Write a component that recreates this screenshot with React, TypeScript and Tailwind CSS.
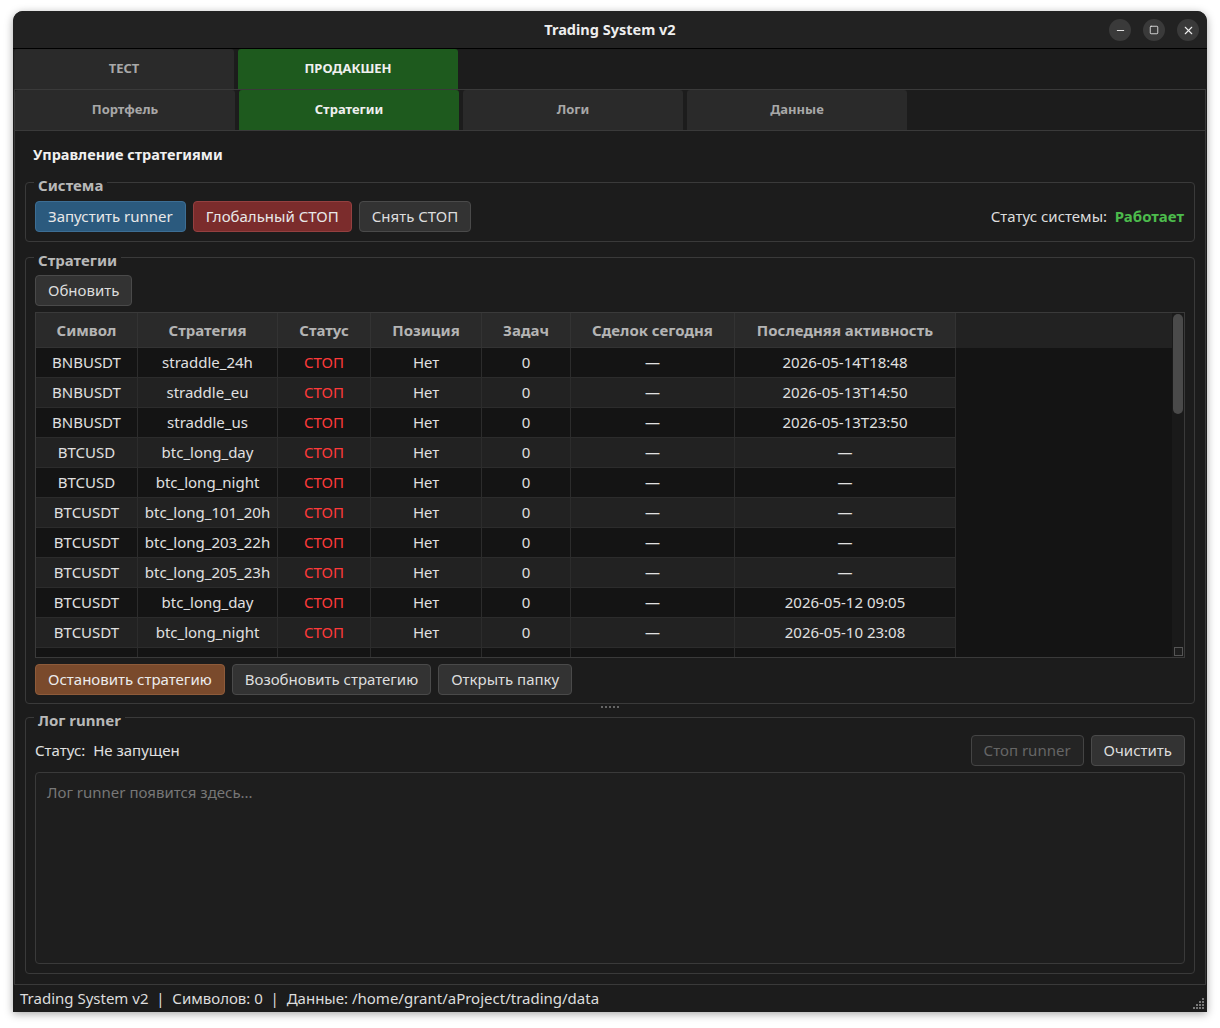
import { Minus, Square, X } from "lucide-react";

type Row = {
  symbol: string;
  strategy: string;
  trades: string;
  last: string;
};

const rows: Row[] = [
  { symbol: "BNBUSDT", strategy: "straddle_24h", trades: "—", last: "2026-05-14T18:48" },
  { symbol: "BNBUSDT", strategy: "straddle_eu", trades: "—", last: "2026-05-13T14:50" },
  { symbol: "BNBUSDT", strategy: "straddle_us", trades: "—", last: "2026-05-13T23:50" },
  { symbol: "BTCUSD", strategy: "btc_long_day", trades: "—", last: "—" },
  { symbol: "BTCUSD", strategy: "btc_long_night", trades: "—", last: "—" },
  { symbol: "BTCUSDT", strategy: "btc_long_101_20h", trades: "—", last: "—" },
  { symbol: "BTCUSDT", strategy: "btc_long_203_22h", trades: "—", last: "—" },
  { symbol: "BTCUSDT", strategy: "btc_long_205_23h", trades: "—", last: "—" },
  { symbol: "BTCUSDT", strategy: "btc_long_day", trades: "—", last: "2026-05-12 09:05" },
  { symbol: "BTCUSDT", strategy: "btc_long_night", trades: "—", last: "2026-05-10 23:08" },
  { symbol: "ETHUSDT", strategy: "eth_long_day", trades: "—", last: "—" },
];

const headers = ["Символ", "Стратегия", "Статус", "Позиция", "Задач", "Сделок сегодня", "Последняя активность"];

const cols = "grid grid-cols-[102px_140px_93px_111px_89px_164px_221px_1fr]";

const Group = ({
  title,
  children,
  className = "",
}: {
  title: string;
  children: React.ReactNode;
  className?: string;
}) => (
  <div className={`border border-[#3a3a3a] rounded-[4px] px-[9px] flex flex-col ${className}`}>
    <span className="-mt-[7px] -ml-[1px] w-fit px-[4px] bg-[#1c1c1c] text-[15px] leading-[18px] font-bold text-[#b8b8b8]">
      {title}
    </span>
    {children}
  </div>
);

const Btn = ({ children, className = "" }: { children: React.ReactNode; className?: string }) => (
  <button
    className={`h-[31px] px-[12px] rounded-[4px] border text-[15px] leading-none whitespace-nowrap ${
      className || "bg-[#333] border-[#4a4a4a] text-[#ddd]"
    }`}
  >
    {children}
  </button>
);

const Tab = ({ label, active }: { label: string; active?: boolean }) => (
  <div
    className={`w-[220px] h-[40px] rounded-t-[3px] flex items-center justify-center text-[13px] font-bold ${
      active ? "bg-[#1e5a1e] text-[#f0f0f0]" : "bg-[#2a2a2a] text-[#a8a8a8]"
    }`}
  >
    {label}
  </div>
);

export default function App() {
  return (
    <div className="min-h-screen bg-white pt-[11px] pl-[13px] font-['Noto_Sans',sans-serif]">
      <div className="w-[1194px] h-[1001px] flex flex-col rounded-t-[10px] bg-[#1c1c1c] shadow-[0_2px_8px_rgba(0,0,0,0.35)] overflow-hidden">
        {/* заголовок окна */}
        <div className="h-[38px] shrink-0 bg-[#222] border-b border-black flex items-center relative">
          <div className="flex-1 text-center text-[14.5px] font-bold text-[#eee]">Trading System v2</div>
          <div className="absolute right-[8px] top-[8px] flex gap-[12px]">
            <span className="w-[22px] h-[22px] rounded-full bg-[#3a3a3a] flex items-end justify-center pb-[5px]">
              <Minus size={11} strokeWidth={2} className="text-[#eee]" />
            </span>
            <span className="w-[22px] h-[22px] rounded-full bg-[#3a3a3a] flex items-center justify-center">
              <Square size={10} strokeWidth={2} className="text-[#eee]" />
            </span>
            <span className="w-[22px] h-[22px] rounded-full bg-[#3a3a3a] flex items-center justify-center">
              <X size={13} strokeWidth={2} className="text-[#eee]" />
            </span>
          </div>
        </div>

        {/* режим */}
        <div className="h-[40px] shrink-0 flex gap-[4px] pl-[1px] items-start">
          <Tab label="ТЕСТ" />
          <Tab label="ПРОДАКШЕН" active />
        </div>

        {/* панель вкладок */}
        <div className="flex-1 mx-[1px] border border-[#3a3a3a] flex flex-col">
          <div className="h-[41px] shrink-0 flex gap-[4px] border-b border-[#3a3a3a] items-start">
            <Tab label="Портфель" />
            <Tab label="Стратегии" active />
            <Tab label="Логи" />
            <Tab label="Данные" />
          </div>

          <div className="flex-1 flex flex-col px-[10px] pb-[10px]">
            <div className="pt-[13px] pl-[8px] text-[14.5px] leading-[20px] font-bold text-[#f0f0f0]">
              Управление стратегиями
            </div>

            {/* Система */}
            <Group title="Система" className="mt-[18px]">
              <div className="flex items-center gap-[7px] mt-[7px] mb-[9px]">
                <Btn className="bg-[#2b5a7e] border-[#3d6e94] text-[#e8e8e8]">Запустить runner</Btn>
                <Btn className="bg-[#7b2c2c] border-[#944040] text-[#e8e8e8]">Глобальный СТОП</Btn>
                <Btn>Снять СТОП</Btn>
                <div className="ml-auto text-[15px] text-[#ddd] pr-[1px]">
                  Статус системы:&nbsp; <span className="font-bold text-[#4cbb4c]">Работает</span>
                </div>
              </div>
            </Group>

            {/* Стратегии */}
            <Group title="Стратегии" className="mt-[15px]">
              <div className="mt-[6px]">
                <Btn>Обновить</Btn>
              </div>
              <div className="mt-[6px] h-[346px] border border-[#3a3a3a] flex bg-[#141414]">
                <div className="flex-1 overflow-hidden">
                  <div className={`${cols} h-[35px] bg-[#222]`}>
                    {headers.map((h) => (
                      <div
                        key={h}
                        className="bg-[#2a2a2a] border-r border-b border-[#333] flex items-center justify-center text-[15px] font-bold text-[#b4b4b4] whitespace-nowrap"
                      >
                        {h}
                      </div>
                    ))}
                    <div />
                  </div>
                  {rows.map((r, i) => (
                    <div key={i} className={`${cols} h-[30px] text-[15px] text-[#e0e0e0]`}>
                      {[r.symbol, r.strategy, "СТОП", "Нет", "0", r.trades, r.last].map((c, j) => (
                        <div
                          key={j}
                          className={`flex items-center justify-center whitespace-nowrap border-r border-b border-[#2c2c2c] ${
                            i % 2 ? "bg-[#222]" : "bg-[#141414]"
                          } ${j === 2 ? "text-[#ff3a3a]" : ""}`}
                        >
                          {i < 10 ? c : ""}
                        </div>
                      ))}
                      <div />
                    </div>
                  ))}
                </div>
                <div className="w-[12px] flex flex-col items-center bg-[#1a1a1a] pt-[1px]">
                  <div className="w-[10px] h-[100px] rounded-full bg-[#4a4a4a]" />
                  <div className="flex-1" />
                  <div className="w-[9px] h-[9px] mb-[1px] border border-[#555] bg-[#1e1e1e]" />
                </div>
              </div>
              <div className="flex gap-[7px] mt-[6px] mb-[8px]">
                <Btn className="bg-[#7a4a2c] border-[#8e5b3a] text-[#ececec]">Остановить стратегию</Btn>
                <Btn>Возобновить стратегию</Btn>
                <Btn>Открыть папку</Btn>
              </div>
            </Group>

            {/* разделитель */}
            <div className="h-[13px] shrink-0 flex justify-center items-start pt-[2px]">
              <div className="w-[18px] h-[2px] border-t-2 border-dotted border-[#666]" />
            </div>

            {/* Лог runner */}
            <Group title="Лог runner" className="flex-1">
              <div className="flex items-center mt-[6px]">
                <div className="text-[15px] text-[#e0e0e0]">Статус:&nbsp; Не запущен</div>
                <div className="ml-auto flex gap-[7px]">
                  <Btn className="bg-[#242424] border-[#444] text-[#666]">Стоп runner</Btn>
                  <Btn>Очистить</Btn>
                </div>
              </div>
              <div className="flex-1 mt-[6px] mb-[9px] rounded-[4px] border border-[#3a3a3a] bg-[#1e1e1e] px-[11px] pt-[8px] text-[15px] text-[#777]">
                Лог runner появится здесь...
              </div>
            </Group>
          </div>
        </div>

        {/* строка состояния */}
        <div className="h-[27px] shrink-0 flex items-center pl-[7px] text-[15px] text-[#ddd] relative">
          Trading System v2&nbsp; |&nbsp; Символов: 0&nbsp; |&nbsp; Данные: /home/grant/aProject/trading/data
          <div className="absolute right-[3px] bottom-[3px] grid grid-cols-4 gap-[1px]">
            {Array.from({ length: 16 }).map((_, k) => (
              <span
                key={k}
                className={`w-[2px] h-[2px] ${(k % 4) + Math.floor(k / 4) >= 3 ? "bg-[#777]" : "bg-transparent"}`}
              />
            ))}
          </div>
        </div>
      </div>
    </div>
  );
}
